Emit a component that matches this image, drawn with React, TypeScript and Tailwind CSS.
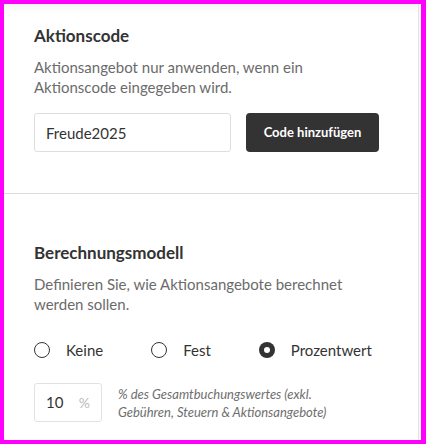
import { useState } from 'react';

// Promo code + calculation model settings panel

type Model = 'none' | 'fixed' | 'percent';

export default function App() {
  const [code, setCode] = useState('Freude2025');
  const [model, setModel] = useState<Model>('percent');
  const [percent, setPercent] = useState('10');

  return (
    <div className="w-[426px] h-[444px] overflow-hidden border-[4px] border-r-[5px] border-[#ff00ff] bg-white font-['Lato',sans-serif] text-[#333]">
      <div className="h-full pr-[2px]">
        <div className="h-full border-r border-[#e2e2e2] shadow-[inset_0_10px_10px_-8px_rgba(0,0,0,0.07)]">
          <section className="px-[30px] pt-[20px] pb-[41px] border-b border-[#dcdcdc]">
            <h2 className="text-[17px] leading-[24px] font-bold">Aktionscode</h2>
            <p className="mt-[9px] text-[15px] leading-[20px] text-[#6b6b6b]">
              Aktionsangebot nur anwenden, wenn ein
              <br />
              Aktionscode eingegeben wird.
            </p>
            <div className="mt-[16px] flex items-center gap-[15px]">
              <input
                value={code}
                onChange={(e) => setCode(e.target.value)}
                className="w-[197px] h-[39px] px-[11px] rounded-[3px] border border-[#dedede] text-[15px] text-[#333] outline-none focus:border-[#999]"
              />
              <button className="w-[133px] h-[39px] rounded-[4px] bg-[#333] text-white text-[13px] font-bold">
                Code hinzufügen
              </button>
            </div>
          </section>

          <section className="px-[30px] pt-[47px]">
            <h2 className="text-[17px] leading-[24px] font-bold">Berechnungsmodell</h2>
            <p className="mt-[9px] text-[15px] leading-[20px] text-[#6b6b6b]">
              Definieren Sie, wie Aktionsangebote berechnet
              <br />
              werden sollen.
            </p>
            <div className="mt-[24px] flex items-center gap-[48px]">
              <Radio label="Keine" checked={model === 'none'} onSelect={() => setModel('none')} />
              <Radio label="Fest" checked={model === 'fixed'} onSelect={() => setModel('fixed')} />
              <Radio label="Prozentwert" checked={model === 'percent'} onSelect={() => setModel('percent')} />
            </div>
            <div className="mt-[21px] flex items-center gap-[16px]">
              <div className="w-[68px] h-[39px] flex items-center px-[11px] rounded-[3px] border border-[#e2e2e2]">
                <input
                  value={percent}
                  onChange={(e) => setPercent(e.target.value)}
                  className="w-[30px] text-[15px] text-[#333] outline-none"
                />
                <span className="ml-auto text-[14px] text-[#bbb]">%</span>
              </div>
              <p className="text-[13px] leading-[18px] italic text-[#6e6e6e]">
                % des Gesamtbuchungswertes (exkl.
                <br />
                Gebühren, Steuern &amp; Aktionsangebote)
              </p>
            </div>
          </section>
        </div>
      </div>
    </div>
  );
}

function Radio({ label, checked, onSelect }: { label: string; checked: boolean; onSelect: () => void }) {
  return (
    <button onClick={onSelect} className="flex items-center gap-[16px] h-[24px]">
      {checked ? (
        <span className="w-[16px] h-[16px] rounded-full bg-[#333] grid place-items-center">
          <span className="w-[6px] h-[6px] rounded-full bg-white" />
        </span>
      ) : (
        <span className="w-[16px] h-[16px] rounded-full border-[1.5px] border-[#333]" />
      )}
      <span className="text-[15px] text-[#333]">{label}</span>
    </button>
  );
}
